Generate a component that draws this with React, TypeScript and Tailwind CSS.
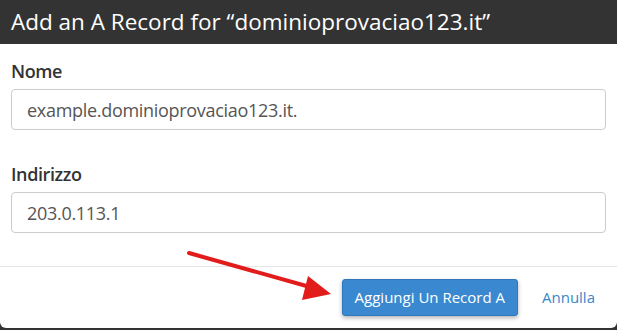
import React from "react";

const font = { fontFamily: '"Open Sans", "Liberation Sans", sans-serif' };

function Field({ label, value }: { label: string; value: string }) {
  return (
    <div>
      <label className="block text-[18px] font-semibold leading-[24px] tracking-[-0.4px] text-[#333]">{label}</label>
      <input
        className="mt-[6px] block h-[41px] w-full rounded-[4px] border border-[#ccc] px-[15px] text-[18px] tracking-[-0.3px] text-[#555] outline-none"
        readOnly
        value={value}
        style={font}
      />
    </div>
  );
}

export default function App() {
  return (
    <div className="h-[330px] w-[617px] overflow-hidden bg-[#333]" style={font}>
      <div className="flex h-[44px] items-center px-[11px]">
        <h1 className="text-[22.5px] leading-none text-white">Add an A Record for “dominioprovaciao123.it”</h1>
      </div>
      <div className="relative flex h-[284px] flex-col rounded-b-[6px] bg-white">
        <div className="flex flex-col gap-[32px] px-[11px] pt-[15px]">
          <Field label="Nome" value="example.dominioprovaciao123.it." />
          <Field label="Indirizzo" value="203.0.113.1" />
        </div>
        <div className="mt-auto flex h-[62px] items-center justify-end gap-[24px] border-t border-[#e5e5e5] pr-[22px]">
          <button className="h-[37px] rounded-[3px] border border-[#2f77bb] bg-[#3a89d0] px-[12px] text-[15px] text-white shadow-[0_2px_4px_rgba(0,0,0,0.3)]">
            Aggiungi Un Record A
          </button>
          <a className="text-[15px] text-[#3a87cc]">Annulla</a>
        </div>
        <svg className="absolute left-0 top-0" width="617" height="284" viewBox="0 44 617 284">
          <line x1="189" y1="253" x2="310" y2="287" stroke="#e21b1b" strokeWidth="4" strokeLinecap="round" />
          <polygon points="331,294 308,276 302,300" fill="#e21b1b" />
        </svg>
      </div>
    </div>
  );
}
